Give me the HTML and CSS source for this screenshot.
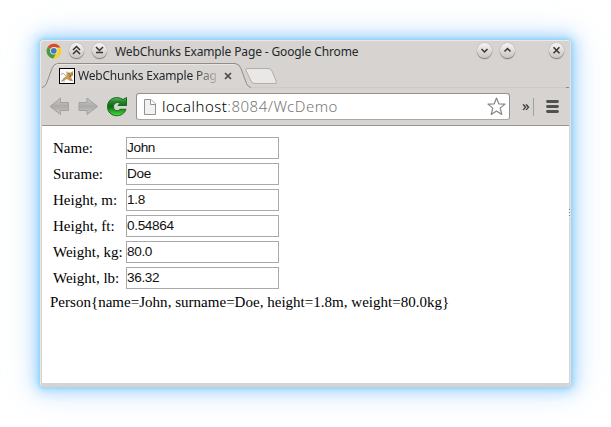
FILE: index.html
```html
<!DOCTYPE html>
<html lang="en">
<head>
<meta charset="utf-8">
<title>WebChunks Example Page</title>
<link rel="stylesheet" href="styles.css">
</head>
<body>
<div class="window">
  <header class="titlebar">
    <svg class="logo" width="16" height="16" viewBox="0 0 16 16">
      <circle cx="8" cy="8" r="7.4" fill="#f7cf32"/>
      <path d="M8 8 1.6 4.3A7.4 7.4 0 0 1 14.4 4.4H8Z" fill="#d9493a"/>
      <path d="M1.6 4.3A7.4 7.4 0 0 0 7.2 15.4L10.6 9.6 8 8Z" fill="#469b48"/>
      <circle cx="7.8" cy="7.8" r="3.7" fill="#f4f1e9"/>
      <circle cx="7.8" cy="7.8" r="2.9" fill="#417bbd"/>
    </svg>
    <span class="round up2"><svg width="15" height="15" viewBox="0 0 15 15"><path d="M4 7 7.500 3.500 11 7M4 11 7.500 7.500 11 11"/></svg></span>
    <span class="round down2"><svg width="15" height="15" viewBox="0 0 15 15"><path d="M4 4 7.500 7.500 11 4M4 9.500H11"/></svg></span>
    <span class="caption">WebChunks Example Page - Google Chrome</span>
    <span class="round minimize"><svg width="15" height="15" viewBox="0 0 15 15"><path d="M4.500 6 7.500 9 10.500 6"/></svg></span>
    <span class="round maximize"><svg width="15" height="15" viewBox="0 0 15 15"><path d="M4.500 8.500 7.500 5.500 10.500 8.500"/></svg></span>
    <span class="round close"><svg width="15" height="15" viewBox="0 0 15 15"><path d="M4.500 4.300 10.500 10.300M10.500 4.300 4.500 10.300"/></svg></span>
  </header>
  <div class="tabs">
    <svg class="tabshape" width="527" height="26" viewBox="0 0 527 26">
      <path d="M209 25.500H527" stroke="#cdcac7" fill="none"/>
      <path d="M524 25.500H527" stroke="#8b8885" fill="none"/>
      <path d="M0 25.500Q3 25 4.500 21.500L10 6.500Q12 1.500 16 1.500H193Q197 1.500 199 6.500L204.500 21.500Q206 25 209 25.500" fill="#d8d5d2" stroke="#8f8c89"/>
      <path d="M12 6Q13.500 2.500 16 2.500H193" fill="none" stroke="#e8e6e4"/>
      <path d="M205 6.500H226Q229 6.500 230 9L234.500 20Q235.500 21.500 232 21.500H213Q210 21.500 209 19L204 8.500Q203.300 6.500 205 6.500Z" fill="#e9e8e6" stroke="#b0adaa"/>
    </svg>
    <svg class="favicon" width="16" height="16" viewBox="0 0 16 16">
      <rect x=".5" y=".5" width="15" height="15" fill="#fff" stroke="#000"/>
      <path d="M7.500 3 9 4.500H12L14 3V7.500L12 9 14 13H11L8 11 4 13H2.500L4.500 10 7.500 8Z" fill="#c99c54"/>
      <path d="M2 7Q3 4 5 6L7 8M2 13H6M10 10.500 13.500 13" fill="none" stroke="#8a8378" stroke-width=".7"/>
      <path d="M9.500 6H10.500M12.500 6H13.500M10.500 8H12" stroke="#5b4227"/>
    </svg>
    <span class="tabtitle">WebChunks Example Page</span>
    <svg class="tabclose" width="8" height="8" viewBox="0 0 8 8"><path d="M1 1 7 7M7 1 1 7" stroke="#4b4948" stroke-width="1.700"/></svg>
  </div>
  <nav class="toolbar">
    <svg class="arrows" width="50" height="20" viewBox="0 0 50 20">
      <defs><linearGradient id="metal" x2="0" y2="1"><stop stop-color="#cbc9c8"/><stop offset=".5" stop-color="#adabaa"/><stop offset="1" stop-color="#c8c6c5"/></linearGradient></defs>
      <path d="M1 9.500 11.500 1V5.500H19.500V13.500H11.500V17.500Z" fill="url(#metal)" stroke="#a3a1a0"/>
      <path d="M48.500 9.500 38 1V5.500H30V13.500H38V17.500Z" fill="url(#metal)" stroke="#a3a1a0"/>
    </svg>
    <svg class="reload" width="22" height="22" viewBox="0 0 22 22">
      <defs><linearGradient id="green" x2="0" y2="1"><stop stop-color="#69b96b"/><stop offset=".2" stop-color="#278b2c"/><stop offset=".5" stop-color="#0d6714"/><stop offset="1" stop-color="#3fe536"/></linearGradient></defs>
      <path d="M17 3.500 20.500 1.500V9.500H12L14.200 7.200C11 5.500 7.500 7.200 7.500 10.800 7.500 14.800 12 16 14 13.300H20C18.500 17.500 15 19.700 10.800 19.700 5.200 19.700 1.500 16 1.500 10.700 1.500 2.500 10.500-.8 17 3.500Z" fill="url(#green)" stroke="#176b1c"/>
    </svg>
    <div class="address">
      <svg width="12" height="16" viewBox="0 0 12 16"><path d="M.5.5H7L11.500 5V15.500H.5Z" fill="#f2f2f2" stroke="#929292"/><path d="M6.500.5V5.500H11.500" fill="#fff" stroke="#929292"/></svg>
      <span class="url"><b>localhost</b>:8084/WcDemo</span>
      <svg class="star" width="19" height="19" viewBox="0 0 19 19"><path d="M9.500 1 11.800 6.800 18 7.100 13.200 11.100 14.800 17.500 9.500 14 4.200 17.500 5.800 11.100 1 7.100 7.200 6.800Z" fill="#fff" stroke="#858585" stroke-width="1.200" stroke-linejoin="round"/></svg>
    </div>
    <span class="more">»</span>
    <span class="divider"></span>
    <svg class="menu" width="13" height="14" viewBox="0 0 13 14"><path d="M1.500 1.500H11.500M1.500 6.500H11.500M1.500 11.500H11.500" stroke="#505250" stroke-width="2.800" stroke-linecap="round"/></svg>
  </nav>
  <main class="page">
    <form class="fields">
      <label for="name">Name:</label><input id="name" value="John">
      <label for="surname">Surame:</label><input id="surname" value="Doe">
      <label for="hm">Height, m:</label><input id="hm" value="1.8">
      <label for="hf">Height, ft:</label><input id="hf" value="0.54864">
      <label for="kg">Weight, kg:</label><input id="kg" value="80.0">
      <label for="lb">Weight, lb:</label><input id="lb" value="36.32">
    </form>
    <p class="summary">Person{name=John, surname=Doe, height=1.8m, weight=80.0kg}</p>
    <span class="grip"></span>
  </main>
</div>
</body>
</html>
```
FILE: styles.css
```css
* { box-sizing: border-box; }
body { margin: 0; padding: 40px; background: #fff; overflow: hidden; }
svg { display: block; flex: none; }
.window {
  width: 531px; height: 347px; padding: 0 2px 4px;
  display: flex; flex-direction: column;
  background: #d6d3d0; border-radius: 4px;
  box-shadow: inset 1px 1px #eae8e6, inset -1px 0 #e5e3df, 0 0 4px 1px #8dd2f9, 0 0 13px 4px rgba(125,200,250,.65), 0 0 30px 7px rgba(165,205,255,.4);
  font-family: "Noto Sans", sans-serif; color: #24282b;
}
.titlebar { height: 22px; display: flex; align-items: center; padding: 0 5px 2px 4px; }
.logo { margin-top: 1px; }
.round {
  width: 15px; height: 15px; flex: none; border-radius: 50%;
  background: linear-gradient(#f5f4f3, #c8c6c4);
  box-shadow: 0 1px 1px #777471, 0 0 1px #888;
}
.round path { fill: none; stroke: #333; stroke-width: 1.5; }
.up2 { margin-left: 7px; }
.down2 { margin-left: 8px; }
.caption { flex: 1; margin-left: 8px; font-size: 12px; line-height: 20px; letter-spacing: -.13px; white-space: nowrap; padding-top: 3px; }
.maximize { margin-left: 8px; }
.close { margin-left: 34px; }
.tabs { position: relative; height: 26px; display: flex; align-items: center; padding: 2px 0 0 17px; }
.tabshape { position: absolute; left: 0; top: 0; }
.favicon, .tabtitle, .tabclose { position: relative; }
.tabtitle {
  width: 138px; margin-left: 3px; overflow: hidden; white-space: nowrap; font-size: 12px; line-height: 20px; letter-spacing: -.2px;
  -webkit-mask-image: linear-gradient(to right, #000 84%, rgba(0,0,0,.2));
  mask-image: linear-gradient(to right, #000 84%, rgba(0,0,0,.2));
}
.tabclose { margin-left: 8px; }
.toolbar { height: 38px; flex: none; display: flex; align-items: center; padding: 0 10px 0 7px; border-bottom: 1px solid #989694; }
.reload { margin-left: 7px; }
.address {
  width: 374px; height: 27px; margin-left: 8px; padding: 0 3px 0 7px;
  display: flex; align-items: center; background: #fff;
  border: 1px solid #94918f; border-bottom-color: #aaa7a4; border-radius: 3px;
}
.url { flex: 1; margin-left: 6px; font-size: 15px; line-height: 24px; letter-spacing: .49px; font-weight: 300; color: #777; white-space: nowrap; padding-bottom: 2px; }
.url b { font-weight: inherit; color: #000; }
.more { width: 10px; margin: 0 0 3px 12px; font-size: 15px; line-height: 20px; }
.divider { width: 1px; height: 18px; margin-left: 1px; background: #a4a09d; }
.menu { margin-left: auto; }
.page { position: relative; flex: 1; padding: 9px 8px 0; background: #fff; font-family: "Liberation Serif", serif; font-size: 15px; color: #000; }
.fields { display: grid; grid-template-columns: 73px 153px; grid-auto-rows: 22px; row-gap: 4px; padding: 2px 0 0 3px; align-items: center; }
.fields label { white-space: nowrap; line-height: 22px; }
.fields input { width: 153px; height: 22px; margin: 0; padding: 0 0 1px; border: 1px solid #a9a9a9; background: #fff; font: 13.6px "Liberation Sans", sans-serif; letter-spacing: -.35px; color: #111; }
.summary { margin: 4px 0 0; line-height: 18px; letter-spacing: .02px; white-space: nowrap; }
.grip { position: absolute; right: -1px; top: 83px; width: 1px; height: 8px; background: repeating-linear-gradient(#777 0 1px, #eee 1px 3px); }
```
